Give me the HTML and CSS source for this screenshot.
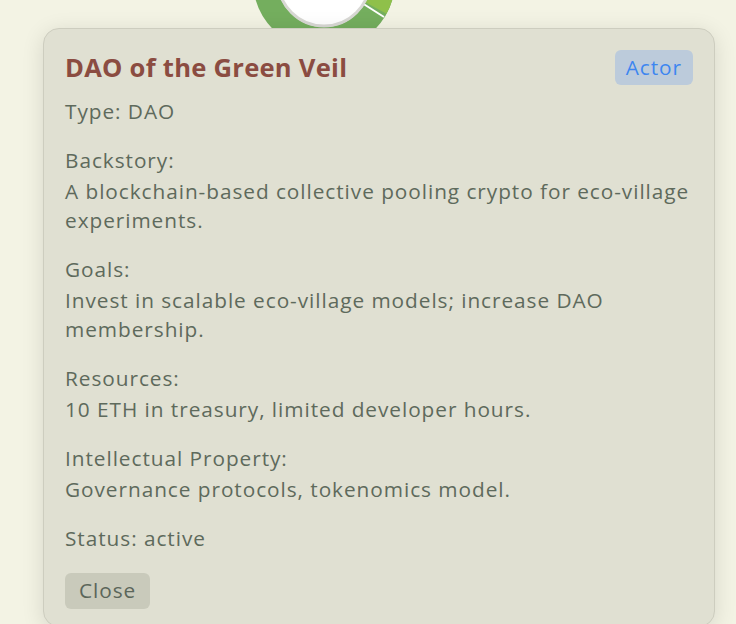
FILE: index.html
```html
<!DOCTYPE html>
<html>

<head>
    <title>DAO of the Green Veil</title>
    <link rel="stylesheet" href="styles.css">
</head>

<body>
    <div class="chart">
        <svg width="142" height="142" viewBox="0 0 142 142">
            <!-- ring segments -->
            <circle cx="71" cy="71" r="59" fill="none" stroke="#74ae5e" stroke-width="24" />
            <circle cx="71" cy="71" r="59" fill="none" stroke="#8fc04a" stroke-width="24"
                stroke-dasharray="60 400" transform="rotate(-30 71 71)" />
            <line x1="109" y1="94" x2="131" y2="108" stroke="#ffffff" stroke-width="2" />
            <circle cx="71" cy="71" r="46" fill="#ffffff" stroke="#d8d8d4" stroke-width="3" />
        </svg>
    </div>

    <div class="modal">
        <div class="modal-head">
            <h2>DAO of the Green Veil</h2>
            <span class="tag">Actor</span>
        </div>

        <p class="row">Type: DAO</p>

        <div class="row">
            <div class="label">Backstory:</div>
            <div class="value">A blockchain-based collective pooling crypto for eco-village experiments.</div>
        </div>

        <div class="row">
            <div class="label">Goals:</div>
            <div class="value">Invest in scalable eco-village models; increase DAO membership.</div>
        </div>

        <div class="row">
            <div class="label">Resources:</div>
            <div class="value">10 ETH in treasury, limited developer hours.</div>
        </div>

        <div class="row">
            <div class="label">Intellectual Property:</div>
            <div class="value">Governance protocols, tokenomics model.</div>
        </div>

        <p class="row">Status: active</p>

        <button type="button" class="close">Close</button>
    </div>
</body>

</html>
```

FILE: styles.css
```css
body {
    margin: 0;
    height: 624px;
    overflow: hidden;
    background: #f3f3e4;
    font-family: "Open Sans", "Noto Sans", sans-serif;
    color: #5e6a5c;
}

/* chart behind the modal, cut off by the top of the window */
.chart svg {
    display: block;
    margin-top: -91px;
    margin-left: 253px;
}

.modal {
    position: absolute;
    left: 43px;
    top: 28px;
    width: 628px;
    height: 556px;
    padding: 21px 21px 20px 21px;
    background: #e0e0d2;
    border: 1px solid #cdcdbf;
    border-radius: 16px;
    box-shadow: 0 4px 22px rgba(0, 0, 0, 0.12);
    font-size: 20.8px;
    line-height: 29px;
    letter-spacing: 0.95px;
}

.modal-head {
    display: flex;
    justify-content: space-between;
    align-items: center;
    margin-bottom: 12px;
}

.modal-head h2 {
    margin: 0;
    font-size: 25.6px;
    line-height: 29px;
    font-weight: 700;
    letter-spacing: 0.25px;
    color: #8b4c41;
}

.tag {
    padding: 3px 11px;
    background: #bccbdb;
    color: #3d86f0;
    border-radius: 6px;
}

.row {
    margin: 0 0 20px;
}

.value {
    margin-top: 2px;
}

.close {
    padding: 3px 14px 4px;
    font: inherit;
    letter-spacing: inherit;
    color: #5b665a;
    background: #c9cabb;
    border: none;
    border-radius: 6px;
    cursor: pointer;
}
```
